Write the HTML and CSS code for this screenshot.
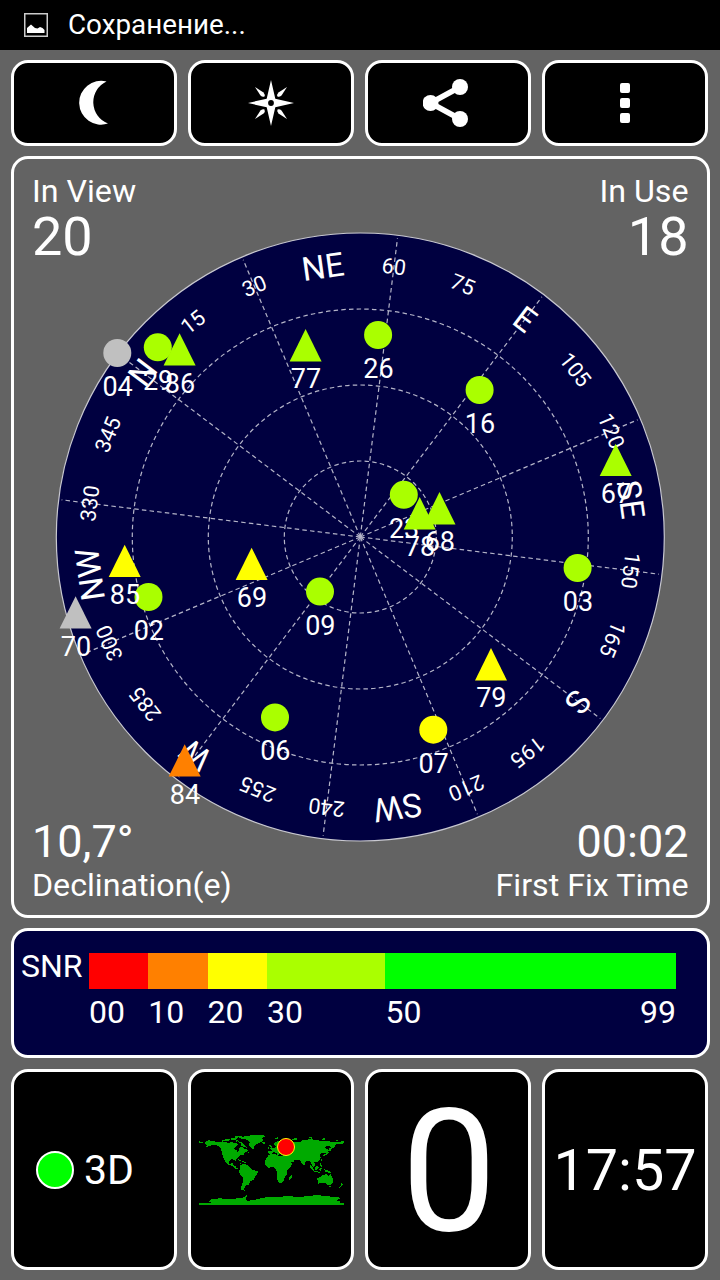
FILE: index.html
```html
<!DOCTYPE html>
<html lang="ru">
    <head>
        <meta charset="UTF-8">
        <meta name="viewport" content="width=device-width,initial-scale=1.0">
        <title>GPS Status</title>
        <link rel="stylesheet" href="styles.css">
    </head>
    <body>
        <header class="statusbar">
            <svg class="picture" viewBox="0 0 24 24">
                <rect x="0.75" y="0.75" width="22.5" height="22.5" fill="none" stroke="#ccc" stroke-width="1.5"/>
                <path d="M3 20V15L7 11.5L11 15L13.5 15.5L16 14L18.500 15L20.500 17V20Z" fill="#fff"/>
            </svg>
            <span class="status-text">Сохранение...</span>
        </header>
        <main>
            <nav class="toolbar">
                <button class="box">
                    <svg width="46" height="46" viewBox="-23 -23 46 46">
                        <path d="M12.500-21.500A21.900 21.900 0 1 0 14 20.500A22.800 22.800 0 0 1 12.500-21.500Z" fill="#fff"/>
                    </svg>
                </button>
                <button class="box">
                    <svg width="48" height="48" viewBox="-24 -24 48 48" fill="#fff">
                        <path d="M0-23L4.300-4.300L23 0L4.300 4.300L0 23L-4.300 4.300L-23 0L-4.300-4.300Z"/>
                        <path d="M-16-16L-7.500-10.500Q-5.500-8-6.500-6.500Q-8.500-5.500-10.500-7.500Z"/>
                        <path d="M-16-16L-7.500-10.500Q-5.500-8-6.500-6.500Q-8.500-5.500-10.500-7.500Z" transform="rotate(90)"/>
                        <path d="M-16-16L-7.500-10.500Q-5.500-8-6.500-6.500Q-8.500-5.500-10.500-7.500Z" transform="rotate(180)"/>
                        <path d="M-16-16L-7.500-10.500Q-5.500-8-6.500-6.500Q-8.500-5.500-10.500-7.500Z" transform="rotate(270)"/>
                        <circle r="2.900" fill="#000"/>
                    </svg>
                </button>
                <button class="box">
                    <svg width="50" height="50" viewBox="-26.500 -25 50 50" fill="#fff">
                        <path d="M10.500-16L-19 0L10.500 16" fill="none" stroke="#fff" stroke-width="5.500"/>
                        <circle cx="-19" cy="0" r="8"/>
                        <circle cx="10.500" cy="-16" r="8"/>
                        <circle cx="10.500" cy="16" r="8"/>
                    </svg>
                </button>
                <button class="box">
                    <svg width="10" height="40" viewBox="0 0 10 40" fill="#fff">
                        <rect y="0" width="10" height="10" rx="2"/>
                        <rect y="15" width="10" height="10" rx="2"/>
                        <rect y="30" width="10" height="10" rx="2"/>
                    </svg>
                </button>
            </nav>

            <section class="sky">
                <svg class="radar" viewBox="14 159 693 756">
                    <circle class="disc" cx="360.300" cy="537" r="304"/>
                    <g transform="translate(360.300 537)">
                        <g class="grid">
                            <circle r="76"/>
                            <circle r="152"/>
                            <circle r="228"/>
                        </g>
                        <g id="compass" transform="rotate(-52.900)"></g>
                    </g>
                    <g id="sats"></g>
                </svg>
                <div class="corner top">
                    <p class="label">In View</p>
                    <p class="count">20</p>
                </div>
                <div class="corner top right">
                    <p class="label">In Use</p>
                    <p class="count">18</p>
                </div>
                <div class="corner bottom">
                    <p class="value">10,7°</p>
                    <p class="label">Declination(e)</p>
                </div>
                <div class="corner bottom right">
                    <p class="value">00:02</p>
                    <p class="label">First Fix Time</p>
                </div>
            </section>

            <section class="snr">
                <p class="snr-title">SNR</p>
                <div class="scale">
                    <div class="step ten"><i class="red"></i><span>00</span></div>
                    <div class="step ten"><i class="orange"></i><span>10</span></div>
                    <div class="step ten"><i class="yellow"></i><span>20</span></div>
                    <div class="step twenty"><i class="lime"></i><span>30</span></div>
                    <div class="step rest"><i class="green"></i><span>50</span><span class="end">99</span></div>
                </div>
            </section>

            <section class="tiles">
                <div class="tile fix">
                    <span class="led"></span>
                    <span>3D</span>
                </div>
                <div class="tile">
                    <svg class="map" viewBox="24 45 435 210">
                        <g fill="#00aa00" shape-rendering="crispEdges">
                            <!-- north america -->
                            <path d="M24 60L28 65L36 66V69H24ZM40 69L46 66L44 63L54 61L66 64L90 66L102 67L116 68L122 66L130 70L136 68L140 74L132 81L128 86L136 90L140 96L144 92L146 82L154 81L160 88L166 87L172 93L164 97L158 99L161 103L148 105L142 111L137 115L135 125L131 119L122 118L116 121L113 128L117 133L125 128L126 135L133 138L136 144L144 147L135 147L126 139L112 134L104 126L96 110L92 96L90 87L80 77L66 74L55 79L42 81L50 76Z"/>
                            <path d="M96 62L104 58L116 58L114 64ZM118 56L130 54L140 56L134 60L122 60ZM140 64L152 66L162 76L168 84L158 80L148 78L152 72ZM120 51L138 49L152 47V51L136 53ZM94 66L90 62L98 60ZM130 62L140 61L138 67Z"/>
                            <path d="M141 118L150 121L154 124L146 122ZM154 124L165 125L164 128L156 127ZM167 96L175 94L174 99ZM147 128H151V131H147Z"/>
                            <!-- greenland, iceland -->
                            <path d="M142 51L165 49L180 46L216 45L224 49L214 54L216 60L211 66L200 71L192 76L187 87L181 84L174 75L176 68L169 59L154 57ZM214 67L222 65L224 70L217 73Z"/>
                            <!-- south america -->
                            <path d="M148 135L158 131L172 136L179 144L186 150L201 154L198 163L192 170L189 179L178 184L173 194L164 197L159 207L162 213L151 209L151 199L155 188L157 175L148 165L144 156L147 147Z"/>
                            <!-- africa -->
                            <path d="M233 104L252 101L255 106L269 107L281 108L286 118L292 128L304 130L298 141L288 151L289 163L281 171L279 183L270 189L262 187L257 173L259 160L254 148L247 141L232 143L222 134L222 122ZM298 168L304 163L301 175L295 180L293 173Z"/>
                            <!-- europe and asia -->
                            <path d="M232 94L244 92L240 87L252 82L256 77L248 76L248 70L260 64L270 60L284 62L304 69L313 65L328 65L335 61L350 59L361 55L372 61L393 62L412 63L429 67L444 67L459 62V70L450 73L434 73L430 81L421 88L418 78L409 77L400 82L414 91L404 100L391 99L386 105L390 113L383 124L370 127L372 136L366 141L360 127L354 122L344 124L339 138L331 129L327 120L313 119L303 113L312 118L309 124L294 131L287 123L282 109L271 105L266 101L261 107L257 99L246 96L243 102L233 103Z"/>
                            <path d="M235 76L240 75L244 86L235 87L239 82ZM230 81H235V86H230ZM250 55L260 52L264 54L256 58ZM300 58L312 55L326 56L310 61ZM350 52L360 50L364 54ZM384 57L402 55L404 60ZM435 60H442V63H435Z"/>
                            <path d="M416 82L421 88L417 94L413 89ZM410 95L416 98L408 103L400 108L393 106L404 101ZM389 118H392V123H389Z"/>
                            <!-- islands -->
                            <path d="M356 134L364 141L371 150L367 152L358 142ZM371 141L382 136L383 145L377 151L371 147ZM386 128L391 132L393 142L388 138ZM370 153L386 155V158L370 156ZM386 144L392 145L389 153L385 151ZM399 147L410 151L420 157L424 160L414 159L402 154Z"/>
                            <path d="M378 176L390 170L397 164L408 163L413 169L418 162L426 178L425 190L418 197L408 194L402 188L390 190L380 191L380 182ZM415 199H420V202H415ZM451 190L456 193L450 199ZM446 198L450 200L445 204Z"/>
                            <!-- antarctica -->
                            <path d="M24 249H62L54 245L60 238L84 235L118 237L150 234L162 231L168 224L170 228L164 235L168 242L184 241L208 235L226 232L262 231L296 227L314 231L336 230L348 227L384 226L420 230L443 231L446 236L435 241L446 244V249H459V255H24Z"/>
                        </g>
                        <circle cx="285" cy="81" r="25.500" fill="#f00" stroke="#ff0" stroke-width="3"/>
                    </svg>
                </div>
                <div class="tile speed">0</div>
                <div class="tile clock">17:57</div>
            </section>
        </main>
        <script>
            const compass=document.querySelector("#compass");
            const sats=document.querySelector("#sats");
            const winds={0:"N",45:"NE",90:"E",135:"SE",180:"S",225:"SW",270:"W",315:"NW"};
            // [number, shape, colour, x, y]
            const list=[
                ["02","c","#aaff00",148.5,597],
                ["03","c","#aaff00",577.6,568],
                ["04","c","#c0c0c0",117.3,353],
                ["06","c","#aaff00",275,717.4],
                ["07","c","#ffff00",433.3,729.7],
                ["09","c","#aaff00",320,591.6],
                ["16","c","#aaff00",479.6,390],
                ["23","c","#aaff00",403.8,494.8],
                ["26","c","#aaff00",378.1,335],
                ["29","c","#aaff00",157.8,347.3],
                ["67","t","#aaff00",615.7,460],
                ["68","t","#aaff00",439.5,508.4],
                ["69","t","#ffff00",251.6,564],
                ["70","t","#c0c0c0",75.6,612.6],
                ["77","t","#aaff00",305.6,345.4],
                ["78","t","#aaff00",419.7,513.4],
                ["79","t","#ffff00",491,664.4],
                ["84","t","#ff8000",184.7,760.6],
                ["85","t","#ffff00",124.7,561],
                ["86","t","#aaff00",179.6,349.6]
            ];
            let rose="";
            for(let deg=0;deg<360;deg+=30){
                rose+=`<line class="spoke" y2="-301" transform="rotate(${deg})"/>`;
            }
            for(let deg=0;deg<360;deg+=15){
                if(winds[deg]){
                    rose+=`<text class="wind" y="-261.500" transform="rotate(${deg})">${winds[deg]}</text>`;
                }
                else{
                    rose+=`<text class="degree" y="-265" transform="rotate(${deg})">${deg}</text>`;
                }
            }
            compass.innerHTML=rose;
            let marks="";
            for(let [num,shape,color,x,y] of list){
                const mark=shape==="c" ? `<circle r="14" fill="${color}"/>` : `<path d="M0-16.300L16 16H-16Z" fill="${color}"/>`;
                marks+=`<g transform="translate(${x} ${y})">${mark}<text class="sat" x="0.300" y="43">${num}</text></g>`;
            }
            sats.innerHTML=marks;
        </script>
    </body>
</html>
```
FILE: styles.css
```css
*{
    margin: 0;
    padding: 0;
    box-sizing: border-box;
}
body{
    width: 720px;
    height: 1280px;
    background-color: #636363;
    color: #fff;
    font-family: Roboto, sans-serif;
    overflow: hidden;
}
.statusbar{
    height: 50px;
    padding-left: 24px;
    display: flex;
    align-items: center;
    gap: 20px;
    background-color: #000;
}
.picture{
    width: 24px;
    height: 24px;
}
.status-text{
    font-size: 27.8px;
    line-height: 50px;
}
main{
    display: flex;
    flex-direction: column;
    gap: 10px;
    padding: 10px 10px 10px 11px;
}
.toolbar{
    display: flex;
    gap: 11px;
    height: 86px;
    margin-right: 2px;
}
.box{
    flex: 1;
    display: flex;
    justify-content: center;
    align-items: center;
    background-color: #000;
    border: 3px solid #fff;
    border-radius: 17px;
}
.sky{
    height: 762px;
    display: grid;
    grid-template-columns: 1fr 1fr;
    grid-template-rows: 1fr 1fr;
    border: 3px solid #fff;
    border-radius: 17px;
}
.radar{
    grid-area: 1 / 1 / 3 / 3;
    width: 693px;
    height: 756px;
}
.corner{
    display: flex;
    flex-direction: column;
    padding: 13px 18px 11px;
}
.top{
    grid-row: 1;
    grid-column: 1;
}
.bottom{
    grid-row: 2;
    grid-column: 1;
    justify-content: flex-end;
}
.right{
    grid-column: 2;
    text-align: right;
    padding-right: 18.5px;
}
.label{
    font-size: 32.2px;
    line-height: 38px;
}
.count{
    font-size: 54px;
    line-height: 54px;
}
.value{
    font-size: 45px;
    line-height: 49px;
}
.disc{
    fill: #000040;
    stroke: #c8c8d0;
    stroke-width: 1.2;
}
.grid circle, .spoke{
    fill: none;
    stroke: #b4b4c8;
    stroke-width: 1.2;
    stroke-dasharray: 4.5 3.2;
}
.wind, .degree, .sat{
    fill: #fff;
    text-anchor: middle;
}
.wind{
    font-size: 33px;
}
.degree{
    font-size: 21.5px;
}
.sat{
    font-size: 27px;
}
.snr{
    height: 130px;
    display: flex;
    padding: 16px 31px 0 7px;
    font-size: 32px;
    line-height: 38px;
    background-color: #000040;
    border: 3px solid #fff;
    border-radius: 17px;
}
.snr-title{
    width: 68px;
}
.scale{
    flex: 1;
    display: flex;
    padding-top: 6px;
}
.step{
    display: flex;
    flex-wrap: wrap;
    align-content: flex-start;
    justify-content: space-between;
    row-gap: 4px;
}
.step i{
    width: 100%;
    height: 36px;
}
.ten{
    flex: 10 0 0;
}
.twenty{
    flex: 20 0 0;
}
.rest{
    flex: 49 0 0;
}
.red{
    background-color: #ff0000;
}
.orange{
    background-color: #ff8000;
}
.yellow{
    background-color: #ffff00;
}
.lime{
    background-color: #aaff00;
}
.green{
    background-color: #00ff00;
}
.tiles{
    display: grid;
    grid-template-columns: repeat(4, minmax(0, 1fr));
    gap: 11px;
    height: 201px;
    margin-top: 1px;
    margin-right: 2px;
}
.tile{
    display: flex;
    justify-content: center;
    align-items: center;
    background-color: #000;
    border: 3px solid #fff;
    border-radius: 17px;
}
.fix{
    justify-content: flex-start;
    gap: 10px;
    padding-left: 22px;
    font-size: 41px;
}
.led{
    width: 38px;
    height: 38px;
    border: 2px solid #fff;
    border-radius: 50%;
    background-color: #00ff00;
}
.map{
    width: 145px;
    height: 70px;
}
.speed{
    font-size: 170px;
    line-height: 190px;
    padding-top: 4px;
    padding-left: 2px;
}
.clock{
    font-size: 57.5px;
    padding-top: 2px;
}
```
